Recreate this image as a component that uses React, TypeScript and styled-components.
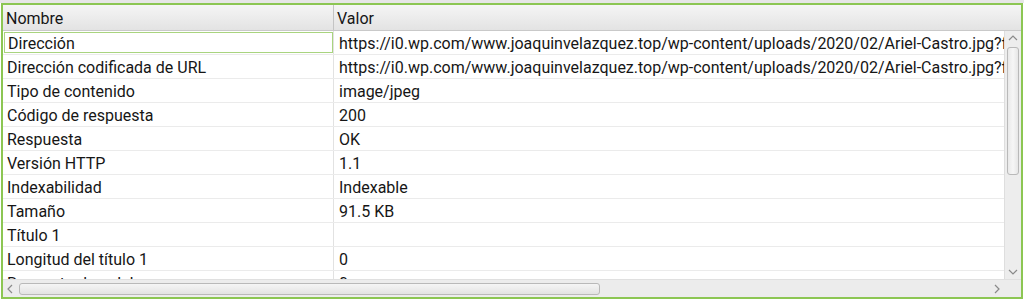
import React from "react";
import styled, { createGlobalStyle } from "styled-components";

const Global = createGlobalStyle`
  html, body { margin: 0; padding: 0; background: #ffffff; }
  body { font-family: Roboto, "Liberation Sans", sans-serif; }
`;

const Page = styled.div`
  width: 1024px;
  height: 303px;
  box-sizing: border-box;
  padding: 3px 1px 4px 1px;
  background: linear-gradient(#e6e6e6 0 3px, #ffffff 3px);
`;

const Frame = styled.div`
  box-sizing: border-box;
  width: 1022px;
  height: 296px;
  border: 2px solid #8cc653;
  display: grid;
  grid-template-rows: 26px 1fr 18px;
  background: #ffffff;
  overflow: hidden;
`;

const Header = styled.div`
  display: grid;
  grid-template-columns: 331px 1fr;
  background: linear-gradient(#f5f5f5, #e3e3e3);
  border-bottom: 1px solid #c9c9c9;
`;

const HeaderCell = styled.div<{ $last?: boolean }>`
  font-size: 16px;
  color: #161616;
  padding-left: 3px;
  padding-top: 1px;
  display: flex;
  align-items: center;
  border-right: ${(p) => (p.$last ? "none" : "1px solid #c4c4c4")};
`;

const Body = styled.div`
  display: grid;
  grid-template-columns: 1fr 17px;
  min-height: 0;
`;

const Rows = styled.div`
  overflow: hidden;
`;

const Row = styled.div`
  display: grid;
  grid-template-columns: 331px 1fr;
  height: 24px;
  box-sizing: border-box;
  border-bottom: 1px solid #ebebeb;
`;

const Cell = styled.div<{ $focus?: boolean; $name?: boolean }>`
  font-size: 16px;
  color: #161616;
  white-space: nowrap;
  overflow: hidden;
  display: flex;
  align-items: center;
  box-sizing: border-box;
  padding-top: 2px;
  padding-left: ${(p) => (p.$name ? "4px" : "5px")};
  border-right: ${(p) => (p.$name ? "1px solid #e2e2e2" : "none")};
  ${(p) =>
    p.$focus
      ? `outline: 1px solid #a9d47f; outline-offset: -2px; padding-left: 5px;`
      : ""}
`;

const VScroll = styled.div`
  background: #ededed;
  border-left: 1px solid #dedede;
  display: grid;
  grid-template-rows: 14px 1fr 14px;
  justify-items: center;
  align-items: center;
`;

const VThumbTrack = styled.div`
  align-self: stretch;
  width: 100%;
  padding: 2px 2px 90px 2px;
  box-sizing: border-box;
`;

const Thumb = styled.div`
  width: 100%;
  height: 100%;
  box-sizing: border-box;
  border: 1px solid #b9b9b9;
  border-radius: 3px;
  background: linear-gradient(90deg, #e9e9e9, #f6f6f6 50%, #e6e6e6);
`;

const HScroll = styled.div`
  background: #ececec;
  border-top: 1px solid #e0e0e0;
  display: grid;
  grid-template-columns: 14px 1fr 14px 17px;
  align-items: center;
`;

const HThumbTrack = styled.div`
  align-self: stretch;
  padding: 3px 390px 2px 2px;
  box-sizing: border-box;
`;

const HThumb = styled(Thumb)`
  background: linear-gradient(#f5f5f5, #e3e3e3);
`;

const Arrow = ({ dir }: { dir: "up" | "down" | "left" | "right" }) => {
  const d = {
    up: "M1 6 L5 2 L9 6",
    down: "M1 2 L5 6 L9 2",
    left: "M6 1 L2 5 L6 9",
    right: "M2 1 L6 5 L2 9",
  }[dir];
  const vertical = dir === "up" || dir === "down";
  return (
    <svg
      width={vertical ? 10 : 8}
      height={vertical ? 8 : 10}
      viewBox={vertical ? "0 0 10 8" : "0 0 8 10"}
      style={{ display: "block", justifySelf: "center" }}
    >
      <path d={d} fill="none" stroke="#8a8a8a" strokeWidth="1.2" />
    </svg>
  );
};

const url =
  "https://i0.wp.com/www.joaquinvelazquez.top/wp-content/uploads/2020/02/Ariel-Castro.jpg?fit=1200%2C675&ssl=1";

const data: [string, string][] = [
  ["Dirección", url],
  ["Dirección codificada de URL", url],
  ["Tipo de contenido", "image/jpeg"],
  ["Código de respuesta", "200"],
  ["Respuesta", "OK"],
  ["Versión HTTP", "1.1"],
  ["Indexabilidad", "Indexable"],
  ["Tamaño", "91.5 KB"],
  ["Título 1", ""],
  ["Longitud del título 1", "0"],
  ["Recuento de palabras", "0"],
];

export default function App() {
  return (
    <>
      <Global />
      <Page>
        <Frame>
          <Header>
            <HeaderCell>Nombre</HeaderCell>
            <HeaderCell $last>Valor</HeaderCell>
          </Header>
          <Body>
            <Rows>
              {data.map(([k, v], i) => (
                <Row key={k}>
                  <Cell $name $focus={i === 0}>
                    {k}
                  </Cell>
                  <Cell>{v}</Cell>
                </Row>
              ))}
            </Rows>
            <VScroll>
              <Arrow dir="up" />
              <VThumbTrack>
                <Thumb />
              </VThumbTrack>
              <Arrow dir="down" />
            </VScroll>
          </Body>
          <HScroll>
            <Arrow dir="left" />
            <HThumbTrack>
              <HThumb />
            </HThumbTrack>
            <Arrow dir="right" />
            <div />
          </HScroll>
        </Frame>
      </Page>
    </>
  );
}
